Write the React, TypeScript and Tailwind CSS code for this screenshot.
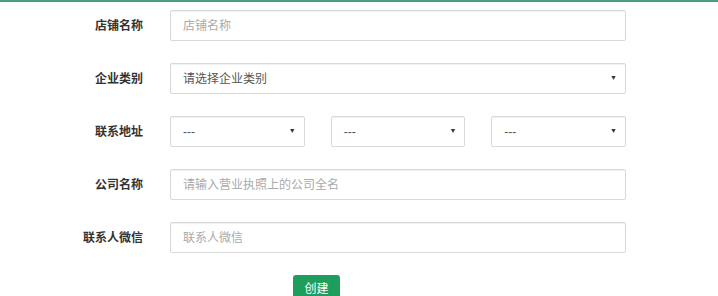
import React from "react";

const font = { fontFamily: '"Liberation Sans", "Noto Sans CJK SC", sans-serif' };

function Label({ text }: { text: string }) {
	return (
		<div className="w-[143px] shrink-0 text-right text-[12px] font-bold text-[#333]">
			{text}
		</div>
	);
}

function TextInput({ placeholder }: { placeholder: string }) {
	return (
		<div className="flex h-[31px] w-[456px] items-center rounded-[2px] border border-[#d9d9d9] bg-white px-3 text-[12px] text-[#aaa] shadow-[inset_0_1px_1px_rgba(0,0,0,0.06)]">
			{placeholder}
		</div>
	);
}

function Select({ value, className }: { value: string; className?: string }) {
	return (
		<div
			className={
				"flex h-[31px] items-center justify-between rounded-[2px] border border-[#d9d9d9] bg-white pl-3 pr-[8px] text-[12px] text-[#555] shadow-[inset_0_1px_1px_rgba(0,0,0,0.06)] " +
				(className ?? "")
			}>
			<span>{value}</span>
			<span className="text-[7px] text-[#333]">▼</span>
		</div>
	);
}

export default function App() {
	return (
		<div className="h-[296px] w-[718px] overflow-hidden bg-white" style={font}>
			<div className="h-[2px] bg-[#4f9b7c]" />
			<div className="flex flex-col gap-[22px] pt-[8px]">
				<div className="flex items-center gap-[27px]">
					<Label text="店铺名称" />
					<TextInput placeholder="店铺名称" />
				</div>
				<div className="flex items-center gap-[27px]">
					<Label text="企业类别" />
					<Select value="请选择企业类别" className="w-[456px]" />
				</div>
				<div className="flex items-center gap-[27px]">
					<Label text="联系地址" />
					<div className="grid w-[456px] grid-cols-3 gap-[26px]">
						<Select value="---" />
						<Select value="---" />
						<Select value="---" />
					</div>
				</div>
				<div className="flex items-center gap-[27px]">
					<Label text="公司名称" />
					<TextInput placeholder="请输入营业执照上的公司全名" />
				</div>
				<div className="flex items-center gap-[27px]">
					<Label text="联系人微信" />
					<TextInput placeholder="联系人微信" />
				</div>
				<div className="pl-[293px]">
					<button className="h-[27px] w-[47px] rounded-[3px] bg-[#1e9e5c] text-[12px] text-white">
						创建
					</button>
				</div>
			</div>
		</div>
	);
}
